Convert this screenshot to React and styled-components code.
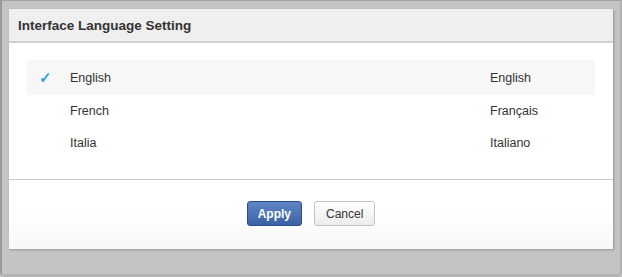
import React, { useState } from 'react';
import styled, { createGlobalStyle } from 'styled-components';

const GlobalStyle = createGlobalStyle`
  html, body {
    margin: 0;
    padding: 0;
    background: #c4c4c4;
    font-family: "Liberation Sans", Arial, sans-serif;
  }
`;

const languages = [
  { name: 'English', native: 'English' },
  { name: 'French', native: 'Français' },
  { name: 'Italia', native: 'Italiano' },
];

const Frame = styled.div`
  width: 622px;
  height: 277px;
  box-sizing: border-box;
  padding: 8px 9px 0 7px;
  border-left: 2px solid #9a9a9a;
  border-top: 1px solid #a4a4a4;
  border-bottom: 3px solid #b4b4b4;
  border-right: 2px solid #b0b0b0;
  border-radius: 0 0 5px 5px;
  background: #c4c4c4;
`;

const Modal = styled.div`
  width: 604px;
  height: 240px;
  background: #fff;
  display: flex;
  flex-direction: column;
  box-shadow: 1px 1px 2px rgba(0, 0, 0, 0.25);
`;

const Header = styled.div`
  height: 32px;
  background: #efefef;
  border-bottom: 2px solid #d2d2d2;
  display: flex;
  align-items: center;
  padding-left: 9px;
  font-size: 13.5px;
  font-weight: bold;
  color: #333;
`;

const List = styled.div`
  padding: 17px 18px 0 18px;
  height: 119px;
  border-bottom: 1px solid #c9c9c9;
`;

const Row = styled.div`
  display: flex;
  align-items: center;
  height: ${p => (p.$first ? 35 : 32)}px;
  background: ${p => (p.$active ? '#f7f7f7' : 'transparent')};
  font-size: 12.5px;
  color: #333;
`;

const Check = styled.span`
  width: 43px;
  padding-left: 12px;
  box-sizing: border-box;
  color: #2aa3d9;
  font-size: 15px;
  font-weight: bold;
`;

const Name = styled.span`
  flex: 1;
`;

const Native = styled.span`
  width: 105px;
`;

const Footer = styled.div`
  flex: 1;
  display: flex;
  justify-content: center;
  align-items: flex-start;
  gap: 12px;
  padding-top: 21px;
  background: linear-gradient(#fff 0%, #fff 45%, #f8f8f8 100%);
`;

const Button = styled.button`
  height: 25px;
  padding: 0 ${p => (p.$primary ? 10 : 11)}px;
  border-radius: 3px;
  font-family: "Liberation Sans", Arial, sans-serif;
  font-size: 12px;
  font-weight: ${p => (p.$primary ? 'bold' : 'normal')};
  color: ${p => (p.$primary ? '#fff' : '#333')};
  border: 1px solid ${p => (p.$primary ? '#2c4d86' : '#c4c4c4')};
  background: ${p =>
    p.$primary
      ? 'linear-gradient(#6186c6, #3b62a6)'
      : 'linear-gradient(#fff, #ececec)'};
  cursor: pointer;
`;

export default function App() {
  const [selected] = useState('English');
  return (
    <>
      <GlobalStyle />
      <Frame>
        <Modal>
          <Header>Interface Language Setting</Header>
          <List>
            {languages.map((l, i) => (
              <Row key={l.name} $first={i === 0} $active={l.name === selected}>
                <Check>{l.name === selected ? '✓' : ''}</Check>
                <Name>{l.name}</Name>
                <Native>{l.native}</Native>
              </Row>
            ))}
          </List>
          <Footer>
            <Button $primary>Apply</Button>
            <Button>Cancel</Button>
          </Footer>
        </Modal>
      </Frame>
    </>
  );
}
